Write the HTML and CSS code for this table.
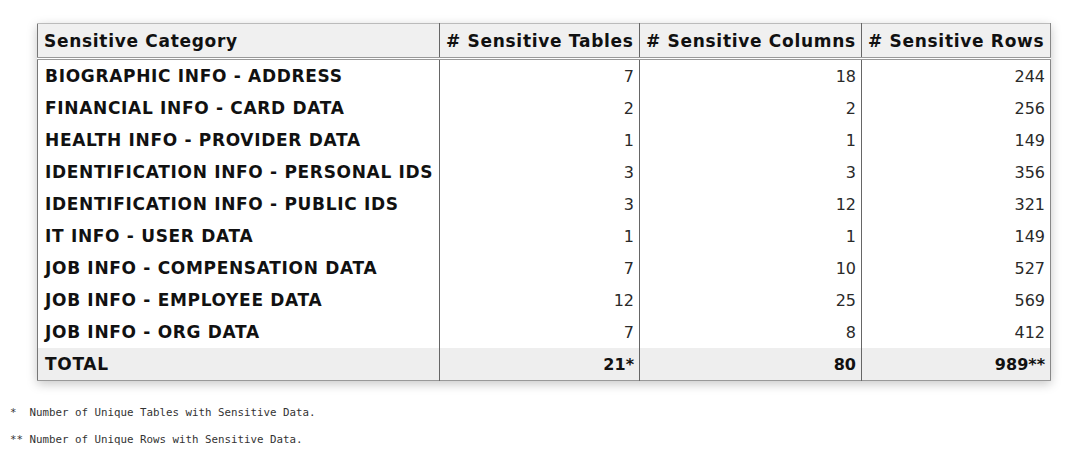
FILE: index.html
```html
<!DOCTYPE html>
<html>
<head>
<meta charset="utf-8">
<link rel="stylesheet" href="styles.css">
</head>
<body>
<div class="wrap">
<table class="grid">
<colgroup><col class="c1"><col class="c2"><col class="c3"><col class="c4"></colgroup>
<thead>
<tr><th class="cat">Sensitive Category</th><th class="num">#&nbsp;Sensitive Tables</th><th class="num">#&nbsp;Sensitive Columns</th><th class="num">#&nbsp;Sensitive Rows</th></tr>
</thead>
<tbody>
<tr><td class="cat">BIOGRAPHIC INFO - ADDRESS</td><td>7</td><td>18</td><td>244</td></tr>
<tr><td class="cat">FINANCIAL INFO - CARD DATA</td><td>2</td><td>2</td><td>256</td></tr>
<tr><td class="cat">HEALTH INFO - PROVIDER DATA</td><td>1</td><td>1</td><td>149</td></tr>
<tr><td class="cat">IDENTIFICATION INFO - PERSONAL IDS</td><td>3</td><td>3</td><td>356</td></tr>
<tr><td class="cat">IDENTIFICATION INFO - PUBLIC IDS</td><td>3</td><td>12</td><td>321</td></tr>
<tr><td class="cat">IT INFO - USER DATA</td><td>1</td><td>1</td><td>149</td></tr>
<tr><td class="cat">JOB INFO - COMPENSATION DATA</td><td>7</td><td>10</td><td>527</td></tr>
<tr><td class="cat">JOB INFO - EMPLOYEE DATA</td><td>12</td><td>25</td><td>569</td></tr>
<tr><td class="cat">JOB INFO - ORG DATA</td><td>7</td><td>8</td><td>412</td></tr>
<tr class="total"><td class="cat">TOTAL</td><td>21*</td><td>80</td><td>989**</td></tr>
</tbody>
</table>
</div>
<div class="notes">
<p>*  Number of Unique Tables with Sensitive Data.</p>
<p>** Number of Unique Rows with Sensitive Data.</p>
</div>
</body>
</html>
```
FILE: styles.css
```css
html, body {
  margin: 0;
  padding: 0;
  background: #fff;
}
body {
  font-family: "DejaVu Sans", sans-serif;
  color: #111;
}
.wrap {
  padding: 23px 0 0 37px;
}
.grid {
  border-collapse: collapse;
  width: 1013px;
  table-layout: fixed;
  box-shadow: 0 3px 10px rgba(0,0,0,0.22);
  border-left: 1px solid #777;
  border-right: 1px solid #888;
  border-top: 1px solid #bbb;
  border-bottom: 1px solid #999;
}
.c1 { width: 402px; }
.c2 { width: 200px; }
.c3 { width: 222px; }
.c4 { width: 189px; }
.grid th, .grid td {
  padding: 0 5px 0 7px;
  border-left: 1px solid #666;
  font-size: 16px;
  white-space: nowrap;
  overflow: hidden;
}
.grid th:first-child, .grid td:first-child {
  border-left: none;
}
.grid th {
  height: 33px;
  background: #f0f0f0;
  font-weight: bold;
  font-size: 17px;
  letter-spacing: 0.7px;
  text-align: left;
  border-bottom: 3px double #999;
  padding-left: 6px;
  padding-right: 2px;
}
.grid td {
  height: 32px;
  text-align: right;
  color: #2a2a2a;
}
.grid td.cat {
  text-align: left;
  font-weight: bold;
  font-size: 17px;
  letter-spacing: 0.68px;
  color: #111;
}
.total td {
  background: #eeeeee;
  font-weight: bold;
  color: #111;
}
.notes {
  padding: 25px 0 0 10px;
  font-family: "DejaVu Sans Mono", monospace;
  font-size: 10.8px;
  color: #333;
}
.notes p {
  margin: 0 0 14px 0;
  white-space: pre;
}
```
